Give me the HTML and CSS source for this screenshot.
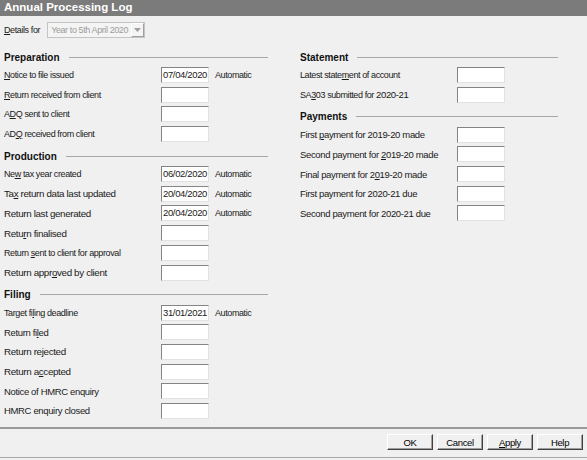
FILE: index.html
```html
<!DOCTYPE html>
<html lang="en">
<head>
    <meta charset="UTF-8">
    <title>Annual Processing Log</title>
    <link rel="stylesheet" href="styles.css">
</head>
<body>
    <div class="window">
        <div class="titlebar">Annual Processing Log</div>

        <div class="details">
            <span class="sm"><u>D</u>etails for</span>
            <div class="combo">
                <span class="combo-text sm">Year to 5th April 2020</span>
                <span class="combo-btn">
                    <svg width="7" height="4" viewBox="0 0 7 4"><path d="M0 0h7L3.5 4z" fill="#a0a0a0"/></svg>
                </span>
            </div>
        </div>

        <div class="columns">
            <div class="col left">
                <div class="section">
                    <div class="heading"><span>Preparation</span><i></i></div>
                    <div class="rows">
                        <span class="sm"><u>N</u>otice to file issued</span><span class="field md">07/04/2020</span><span class="auto sm">Automatic</span>
                        <span class="sm"><u>R</u>eturn received from client</span><span class="field"></span><span></span>
                        <span class="sm">A<u>D</u>Q sent to client</span><span class="field"></span><span></span>
                        <span class="sm">AD<u>Q</u> received from client</span><span class="field"></span><span></span>
                    </div>
                </div>

                <div class="section">
                    <div class="heading"><span>Production</span><i></i></div>
                    <div class="rows">
                        <span class="sm">Ne<u>w</u> tax year created</span><span class="field md">06/02/2020</span><span class="auto sm">Automatic</span>
                        <span class="lg">Ta<u>x</u> return data last updated</span><span class="field md">20/04/2020</span><span class="auto sm">Automatic</span>
                        <span class="lg">Return last generated</span><span class="field md">20/04/2020</span><span class="auto sm">Automatic</span>
                        <span class="lg">Retu<u>r</u>n finalised</span><span class="field"></span><span></span>
                        <span class="sm">Return <u>s</u>ent to client for approval</span><span class="field"></span><span></span>
                        <span class="lg">Return appr<u>o</u>ved by client</span><span class="field"></span><span></span>
                    </div>
                </div>

                <div class="section">
                    <div class="heading"><span>Filing</span><i></i></div>
                    <div class="rows">
                        <span class="sm">Target fi<u>l</u>ing deadline</span><span class="field md">31/01/2021</span><span class="auto sm">Automatic</span>
                        <span class="md">Return fi<u>l</u>ed</span><span class="field"></span><span></span>
                        <span class="lg">Return re<u>j</u>ected</span><span class="field"></span><span></span>
                        <span class="lg">Return a<u>c</u>cepted</span><span class="field"></span><span></span>
                        <span class="md">Notice of HMRC enquiry</span><span class="field"></span><span></span>
                        <span class="md">HMRC enquiry closed</span><span class="field"></span><span></span>
                    </div>
                </div>
            </div>

            <div class="col right">
                <div class="section">
                    <div class="heading"><span>Statement</span><i></i></div>
                    <div class="rows">
                        <span class="sm">Latest state<u>m</u>ent of account</span><span class="field"></span><span></span>
                        <span class="sm">SA<u>3</u>03 submitted for <span class="md">2020-21</span></span><span class="field"></span><span></span>
                    </div>
                </div>

                <div class="section">
                    <div class="heading"><span>Payments</span><i></i></div>
                    <div class="rows">
                        <span class="md">First <u>p</u>ayment for 2019-20 made</span><span class="field"></span><span></span>
                        <span class="md">Second payment for <u>2</u>019-20 made</span><span class="field"></span><span></span>
                        <span class="md">Final payment for 2<u>0</u>19-20 made</span><span class="field"></span><span></span>
                        <span class="md">First payment for 2020-21 due</span><span class="field"></span><span></span>
                        <span class="md">Second payment for 2020-21 due</span><span class="field"></span><span></span>
                    </div>
                </div>
            </div>
        </div>

        <div class="footer">
            <button class="md">OK</button>
            <button class="md">Cancel</button>
            <button class="md"><u>A</u>pply</button>
            <button class="md">Help</button>
        </div>
    </div>
</body>
</html>
```

FILE: styles.css
```css
body {
    margin: 0;
    background-color: #f0f0f0;
    color: #000;
    font-family: "Liberation Sans", Arial, sans-serif;
}

.window {
    height: 460px;
    display: flex;
    flex-direction: column;
}

/* text sizes - the source mixes a few */
.sm,
.md,
.lg {
    color: #1a1a1a;
    white-space: nowrap;
}

.sm {
    font-size: 9px;
    letter-spacing: -0.4px;
}

.md {
    font-size: 9.5px;
    letter-spacing: -0.35px;
}

.lg {
    font-size: 9.8px;
    letter-spacing: -0.35px;
}

u {
    text-underline-offset: 1px;
}

.titlebar {
    height: 16px;
    line-height: 15px;
    background-color: #7b7b7b;
    color: white;
    font-weight: bold;
    font-size: 11.5px;
    padding-left: 4px;
}

.details {
    display: flex;
    align-items: center;
    gap: 7px;
    padding: 6px 4px 0;
    height: 16px;
}

.combo {
    width: 98px;
    height: 16px;
    box-sizing: border-box;
    border: 1px solid #c4c4c4;
    background: #f4f4f4;
    display: flex;
    align-items: center;
    justify-content: space-between;
}

.combo-text {
    padding-left: 3px;
}

.combo .combo-text {
    color: #9c9c9c;
}

.combo-btn {
    width: 13px;
    height: 14px;
    box-sizing: border-box;
    border: 1px solid;
    border-color: #fff #a0a0a0 #a0a0a0 #fff;
    display: flex;
    align-items: center;
    justify-content: center;
}

.columns {
    flex: 1;
    display: flex;
    gap: 32px;
    padding-left: 4px;
    margin-top: 13px;
}

.left {
    width: 264px;
}

.right {
    width: 258px;
}

.section + .section {
    margin-top: 8px;
}

.heading {
    display: flex;
    align-items: center;
    gap: 9px;
    height: 12px;
    margin-bottom: 4px;
    font-size: 10px;
    font-weight: bold;
    color: #111;
}

.heading i {
    flex: 1;
    border-top: 1px solid #a8a8a8;
}

.rows {
    display: grid;
    grid-template-columns: 157px 48px auto;
    grid-auto-rows: 16px;
    row-gap: 3.7px;
    align-items: center;
}

.field {
    height: 16px;
    box-sizing: border-box;
    border: 1px solid;
    border-color: #848484 #e2e2e2 #e2e2e2 #848484;
    background: white;
    padding: 0 1px;
    line-height: 14px;
}

.auto {
    padding-left: 6px;
}

.footer {
    border-top: 2px solid #9a9a9a;
    border-bottom: 1px solid #a8a8a8;
    height: 23px;
    margin-bottom: 2px;
    display: flex;
    justify-content: flex-end;
    align-items: flex-start;
    gap: 4px;
    padding: 5px 4px 0 0;
}

.footer button {
    width: 46px;
    height: 16px;
    padding: 0;
    font-family: inherit;
    background: #f0f0f0;
    border: 1px solid;
    border-color: #fff #404040 #404040 #fff;
    box-shadow: inset -1px -1px 0 #a0a0a0;
    color: #000;
}
```
